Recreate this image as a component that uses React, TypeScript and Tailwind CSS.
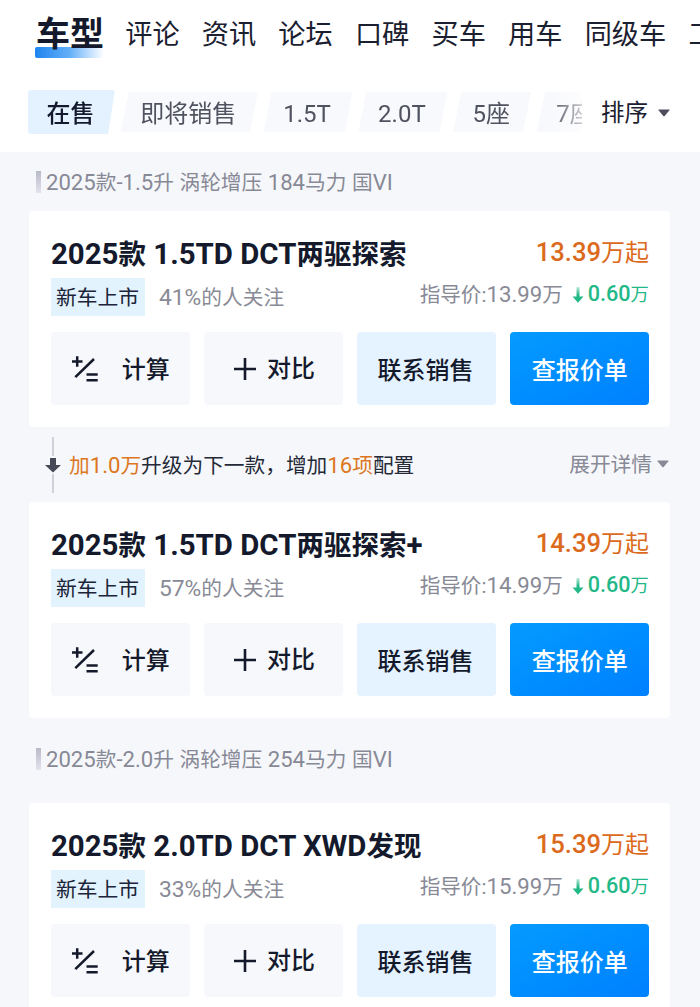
import React from "react";

const tabs = ["评论", "资讯", "论坛", "口碑", "买车", "用车", "同级车", "工况"];

const filters = [
  { label: "即将销售", size: "w-[137px]" },
  { label: "1.5T", size: "w-[89px]" },
  { label: "2.0T", size: "w-[89px]" },
  { label: "5座", size: "w-[78px]" },
  { label: "7座", size: "w-[78px]" },
];

type Car = {
  name: string;
  percent: string;
  price: string;
  guide: string;
};

const cars: Car[] = [
  { name: "2025款 1.5TD DCT两驱探索", percent: "41%", price: "13.39", guide: "13.99" },
  { name: "2025款 1.5TD DCT两驱探索+", percent: "57%", price: "14.39", guide: "14.99" },
  { name: "2025款 2.0TD DCT XWD发现", percent: "33%", price: "15.39", guide: "15.99" },
];

// Latin letters and digits are set slightly larger than the Chinese around them
function Mixed({ text }: { text: string }) {
  return (
    <>
      {text.split(/([\x20-\x7e]+)/).map((part, i) =>
        i % 2 ? (
          <span key={i} className="text-[1.07em]">{part}</span>
        ) : (
          part
        )
      )}
    </>
  );
}

function Caret({ className }: { className: string }) {
  return (
    <svg viewBox="0 0 12 8" className={className} fill="currentColor">
      <path d="M1 0.5h10q1 0 .4.8L6.7 7q-.7.7-1.4 0L.6 1.3Q0 .5 1 .5Z" />
    </svg>
  );
}

function CalcIcon() {
  return (
    <svg viewBox="0 0 28 28" className="h-7 w-7" fill="none" stroke="currentColor" strokeWidth="2.5">
      <path d="M1 6.5h10.5M6.2 1.2v10.6M4.3 22.2 23 4M15.5 19.6h11.2M15.5 25.2h11.2" />
    </svg>
  );
}

function PlusIcon() {
  return (
    <svg viewBox="0 0 24 24" className="h-6 w-6" fill="none" stroke="currentColor" strokeWidth="2.6">
      <path d="M1 12h22M12 1v22" />
    </svg>
  );
}

function GroupLabel({ text }: { text: string }) {
  return (
    <div className="flex items-center pl-9 text-[20.7px] text-[#878996]">
      <span className="mr-[5px] h-[22px] w-[5px] bg-gradient-to-b from-[#b9bac8] to-[#e2e3ec]" />
      <span className="pt-[2px]">
        <Mixed text={text} />
      </span>
    </div>
  );
}

function CarCard({ car }: { car: Car }) {
  return (
    <div className="mr-[30px] ml-[29px] h-[216px] shrink-0 rounded-[4px] bg-white pt-[22px] pr-[21px] pl-[22px]">
      <div className="flex h-10 items-center justify-between">
        <h2 className="pt-[2px] text-[27.5px] font-bold text-[#141a2c]">
          <Mixed text={car.name} />
        </h2>
        <div className="pb-[2px] text-[24px] text-[#dc6a1c]">
          <span className="text-[25.6px] font-medium">{car.price}</span>万起
        </div>
      </div>

      <div className="mt-[5px] flex h-[38px] justify-between">
        <div className="flex items-center">
          <span className="flex h-[38px] w-[94px] items-center justify-center bg-[#e3f3fe] pt-[3px] pr-px text-[20.8px] text-[#1b2438]">
            新车上市
          </span>
          <span className="ml-[14px] pt-[3px] text-[20.7px] text-[#888a96]">
            <span className="text-[22.8px]">{car.percent}</span>的人关注
          </span>
        </div>
        <div className="flex h-[34px] items-center text-[20.6px] text-[#888a96]">
          <span>
            指导价:<span className="text-[22.2px]">{car.guide}</span>万
          </span>
          <svg viewBox="0 0 12 18" className="mr-1 mb-px ml-[9px] h-[18px] w-3">
            <defs>
              <linearGradient id="drop" x1="0" y1="0" x2="0" y2="1">
                <stop offset="0" stopColor="#23b887" stopOpacity="0.3" />
                <stop offset="0.5" stopColor="#23b887" />
              </linearGradient>
            </defs>
            <path d="M4.5 1h3v9.5h4L6 16.8.5 10.5h4Z" fill="url(#drop)" />
          </svg>
          <span className="pb-[2px] text-[#23b887]">
            <span className="text-[21.6px] font-medium">0.60</span>
            <span className="text-[18.4px]">万</span>
          </span>
        </div>
      </div>

      <div className="mt-4 grid grid-cols-4 gap-[14.5px] text-[24px] font-medium text-[#141a2c]">
        <button className="flex h-[73px] items-center justify-center gap-[23px] rounded-[4px] bg-[#f6f8fb]">
          <CalcIcon />
          <span className="pt-[3px]">计算</span>
        </button>
        <button className="flex h-[73px] items-center justify-center gap-[10px] rounded-[4px] bg-[#f6f8fb] pl-px">
          <PlusIcon />
          对比
        </button>
        <button className="h-[73px] rounded-[4px] bg-[#e5f2ff] pt-1 pr-[2px]">联系销售</button>
        <button className="h-[73px] rounded-[4px] bg-gradient-to-br from-[#069bff] to-[#0180ff] pt-1 text-white">
          查报价单
        </button>
      </div>
    </div>
  );
}

export default function App() {
  return (
    <div className="flex h-[1007px] w-[700px] flex-col overflow-hidden bg-[#f6f7fa] font-['Roboto','Noto_Sans_CJK_SC',sans-serif] whitespace-nowrap">
      {/* HEADER */}
      <header className="h-[152px] shrink-0 overflow-hidden bg-white">
        <nav className="flex h-[68px] items-center gap-[22.2px] pt-[2px] pl-[35px] text-[27.2px] text-[#1b2030]">
          <div className="relative w-[68px] pb-[2px] pl-px text-[34px] font-bold text-[#141a2c]">
            <span className="absolute bottom-[4px] left-0 h-[11px] w-[69px] rounded-[2px] bg-gradient-to-r from-[#1a84ef] via-[#62aff7] to-white" />
            <span className="relative">车型</span>
          </div>
          {tabs.map((tab) => (
            <span key={tab} className="shrink-0">{tab}</span>
          ))}
        </nav>

        <div className="mt-[22px] flex h-11 items-center">
          <div className="flex w-[582px] items-center gap-[5.8px] overflow-hidden pl-[28px] text-[24px] text-[#50525f] [mask-image:linear-gradient(to_right,black_550px,transparent_596px)]">
            <span className="flex h-11 w-[87px] shrink-0 items-center justify-center rounded-[3px] bg-[#e3f2fe] pt-[3px] pr-[2px] font-medium text-[#141a2c] [clip-path:polygon(0_0,100%_0,calc(100%-7px)_100%,0_100%)]">
              在售
            </span>
            {filters.map((f) => (
              <span
                key={f.label}
                className={`flex h-10 shrink-0 items-center justify-center bg-[#f8f9fc] pt-[3px] pr-[2px] [clip-path:polygon(8px_0,100%_0,calc(100%-8px)_100%,0_100%)] ${f.size}`}
              >
                {f.label}
              </span>
            ))}
          </div>
          <div className="ml-[19px] flex items-center pt-1 text-[23.5px] text-[#1b2030]">
            排序
            <Caret className="mb-[3px] ml-[10px] h-2 w-3 text-[#4c4e5c]" />
          </div>
        </div>
      </header>

      {/* 1.5T */}
      <div className="flex h-[59px] shrink-0 items-center pt-px">
        <GroupLabel text="2025款-1.5升 涡轮增压 184马力 国VI" />
      </div>
      <CarCard car={cars[0]} />

      {/* UPGRADE HINT */}
      <div className="flex h-[75px] shrink-0 items-center pr-[31px] pl-[45px] text-[20.7px] text-[#252a38]">
        <svg viewBox="0 0 16 58" className="mr-2 h-[58px] w-4">
          <path d="M8 1v19M8 38v19" stroke="#cfd0da" strokeWidth="2" />
          <path d="M5 22h6v7h5l-8 7.5L0 29h5Z" fill="#474957" />
        </svg>
        <p className="pt-[3px]">
          <span className="text-[#dc771f]">
            <Mixed text="加1.0万" />
          </span>
          升级为下一款，增加
          <span className="text-[#dc771f]">
            <Mixed text="16项" />
          </span>
          配置
        </p>
        <div className="ml-auto flex items-center text-[#878996]">
          <span className="pt-[3px]">展开详情</span>
          <Caret className="ml-[5px] h-2 w-3" />
        </div>
      </div>
      <CarCard car={cars[1]} />

      {/* 2.0T */}
      <div className="flex h-[85px] shrink-0 items-center pb-[3px]">
        <GroupLabel text="2025款-2.0升 涡轮增压 254马力 国VI" />
      </div>
      <CarCard car={cars[2]} />
    </div>
  );
}
